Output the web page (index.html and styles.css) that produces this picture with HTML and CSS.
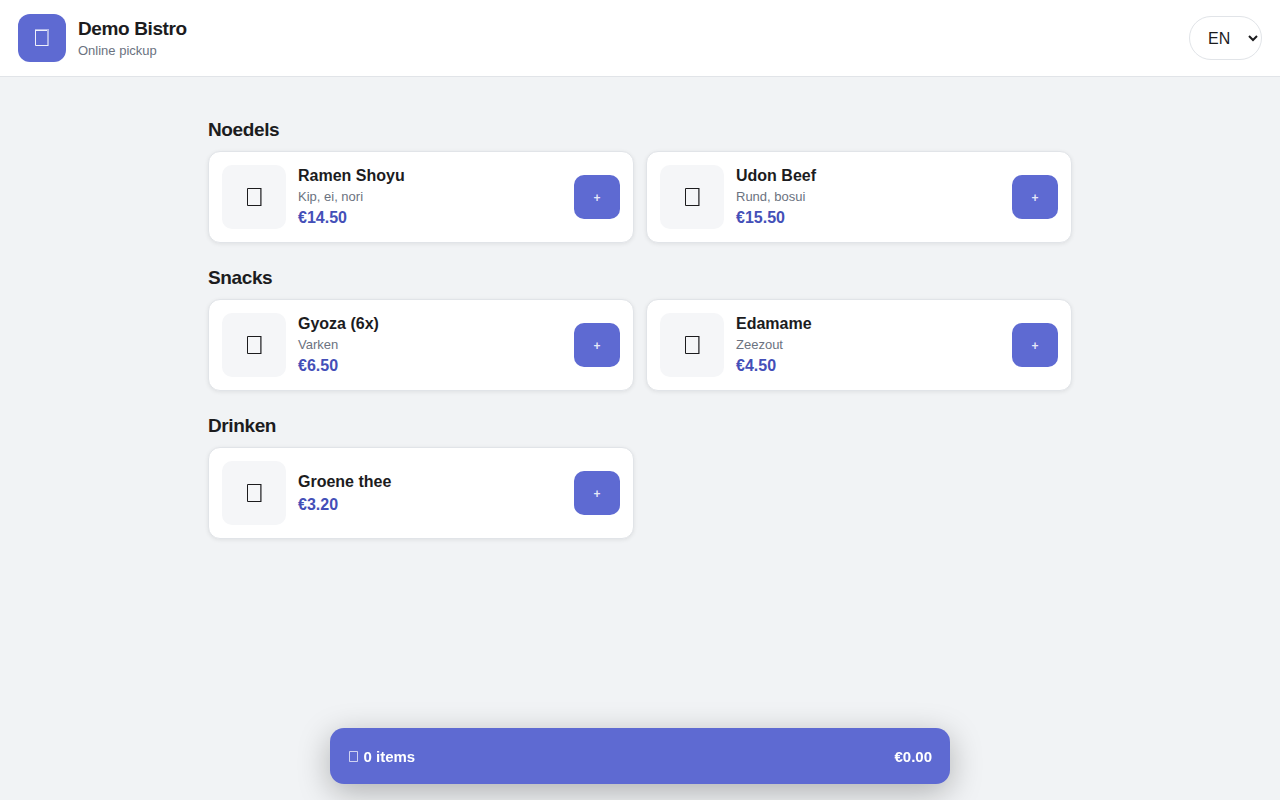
FILE: index.html
```html
<!DOCTYPE html>
<html lang="en">
<head>
<meta charset="utf-8">
<title>Demo Bistro</title>
<link rel="stylesheet" href="styles.css">
</head>
<body>
<header class="topbar">
  <div class="brand">
    <div class="logo"><svg class="logo-icon" viewBox="0 0 14 17" aria-hidden="true"><path class="soft" d="M0 .5H13M13.5 0V17"/><path class="edge" d="M.5 1V16.5H13M1 1.5H12"/><path class="soft" d="M12.5 1V16"/></svg></div>
    <div>
      <h1 class="brand-name">Demo Bistro</h1>
      <div class="brand-sub">Online pickup</div>
    </div>
  </div>
  <select class="lang" aria-label="Language"><option>EN</option><option>NL</option></select>
</header>
<main class="menu">
  <section class="category">
    <h2 class="category-title">Noedels</h2>
    <div class="grid">
      <article class="card"><div class="thumb"><svg class="thumb-icon" viewBox="0 0 15 18" aria-hidden="true"><path d="M14 .5H.5V17.5H14"/><path class="side" d="M13.9 0V18"/></svg></div><div class="info"><div class="name">Ramen Shoyu</div><div class="desc">Kip, ei, nori</div><div class="price">€14.50</div></div><button class="add">+</button></article>
      <article class="card"><div class="thumb"><svg class="thumb-icon" viewBox="0 0 15 18" aria-hidden="true"><path d="M14 .5H.5V17.5H14"/><path class="side" d="M13.9 0V18"/></svg></div><div class="info"><div class="name">Udon Beef</div><div class="desc">Rund, bosui</div><div class="price">€15.50</div></div><button class="add">+</button></article>
    </div>
  </section>
  <section class="category">
    <h2 class="category-title">Snacks</h2>
    <div class="grid">
      <article class="card"><div class="thumb"><svg class="thumb-icon" viewBox="0 0 15 18" aria-hidden="true"><path d="M14 .5H.5V17.5H14"/><path class="side" d="M13.9 0V18"/></svg></div><div class="info"><div class="name">Gyoza (6x)</div><div class="desc">Varken</div><div class="price">€6.50</div></div><button class="add">+</button></article>
      <article class="card"><div class="thumb"><svg class="thumb-icon" viewBox="0 0 15 18" aria-hidden="true"><path d="M14 .5H.5V17.5H14"/><path class="side" d="M13.9 0V18"/></svg></div><div class="info"><div class="name">Edamame</div><div class="desc">Zeezout</div><div class="price">€4.50</div></div><button class="add">+</button></article>
    </div>
  </section>
  <section class="category">
    <h2 class="category-title">Drinken</h2>
    <div class="grid">
      <article class="card"><div class="thumb"><svg class="thumb-icon" viewBox="0 0 15 18" aria-hidden="true"><path d="M14 .5H.5V17.5H14"/><path class="side" d="M13.9 0V18"/></svg></div><div class="info"><div class="name">Groene thee</div><div class="price">€3.20</div></div><button class="add">+</button></article>
    </div>
  </section>
</main>
<div class="cart">
  <span class="cart-count"><svg class="cart-icon" viewBox="0 0 9 11" aria-hidden="true"><path d="M.5 .5H8.5V10.5H.5Z"/></svg><span>0 items</span></span>
  <span>€0.00</span>
</div>
</body>
</html>
```
FILE: styles.css
```css
* { box-sizing: border-box; }
body {
  margin: 0;
  min-height: 100vh;
  background: #f1f3f5;
  color: #1c1c1e;
  font-family: "Liberation Sans", Arial, sans-serif;
  font-size: 16px;
}
svg { display: block; fill: none; stroke: currentColor; }
.soft { stroke-opacity: 0.5; }
.side { stroke-width: 1.2; }
.topbar {
  display: flex;
  align-items: center;
  justify-content: space-between;
  height: 77px;
  padding: 0 18px;
  background: #fff;
  border-bottom: 1px solid #e1e4e8;
}
.brand { display: flex; align-items: center; gap: 12px; }
.logo {
  width: 48px;
  height: 48px;
  padding: 15px 17px;
  border-radius: 12px;
  background: #5e6ad2;
  color: #fff;
}
.logo-icon { width: 14px; height: 17px; }
.edge { stroke-opacity: 0.9; }
.brand-name { margin: 0; font-size: 19px; line-height: 22px; letter-spacing: -0.38px; }
.brand-sub { margin-top: 3px; font-size: 13px; line-height: 15px; color: #6b7280; }
.lang {
  height: 44px;
  padding: 0 14px;
  border: 1px solid #e1e4e8;
  border-radius: 999px;
  background: #fff;
  color: #1c1c1e;
  font: 16px "Liberation Sans", Arial, sans-serif;
}
.menu { width: 864px; margin: 0 auto; padding-top: 42px; }
.category { margin-bottom: 24px; }
.category-title { margin: 0 0 10px; font-size: 19px; line-height: 22px; letter-spacing: -0.38px; }
.grid { display: grid; grid-template-columns: 1fr 1fr; gap: 12px; }
.card {
  display: flex;
  align-items: center;
  gap: 12px;
  height: 92px;
  padding: 13px;
  background: #fff;
  border: 1px solid #e1e4e8;
  border-radius: 12px;
  box-shadow: 0 1px 4px rgba(0, 0, 0, 0.08);
}
.thumb {
  width: 64px;
  height: 64px;
  padding: 23px 25px;
  border-radius: 10px;
  background: #f5f6f8;
}
.thumb-icon { width: 15px; height: 18px; }
.info { flex: 1; }
.name { font-weight: 700; line-height: 18px; }
.desc { margin-top: 4px; font-size: 13px; line-height: 15px; color: #6b7280; }
.price { margin-top: 5px; font-weight: 700; line-height: 18px; color: #444fb8; }
.add {
  width: 46px;
  height: 44px;
  padding: 1px 0 0;
  border: 0;
  border-radius: 10px;
  background: #5e6ad2;
  color: rgba(255, 255, 255, 0.85);
  font: 700 12px "Liberation Sans", Arial, sans-serif;
}
.cart {
  position: fixed;
  bottom: 16px;
  left: 50%;
  display: flex;
  align-items: center;
  justify-content: space-between;
  width: 620px;
  height: 56px;
  padding: 0 18px;
  transform: translateX(-50%);
  border-radius: 14px;
  background: #5e6ad2;
  color: #fff;
  font-size: 15px;
  font-weight: 700;
  box-shadow: 0 8px 32px rgba(0, 0, 0, 0.28);
}
.cart-count { display: flex; align-items: center; gap: 5.5px; padding-left: 1px; }
.cart-icon { width: 9px; height: 11px; stroke-opacity: 0.7; }
```
